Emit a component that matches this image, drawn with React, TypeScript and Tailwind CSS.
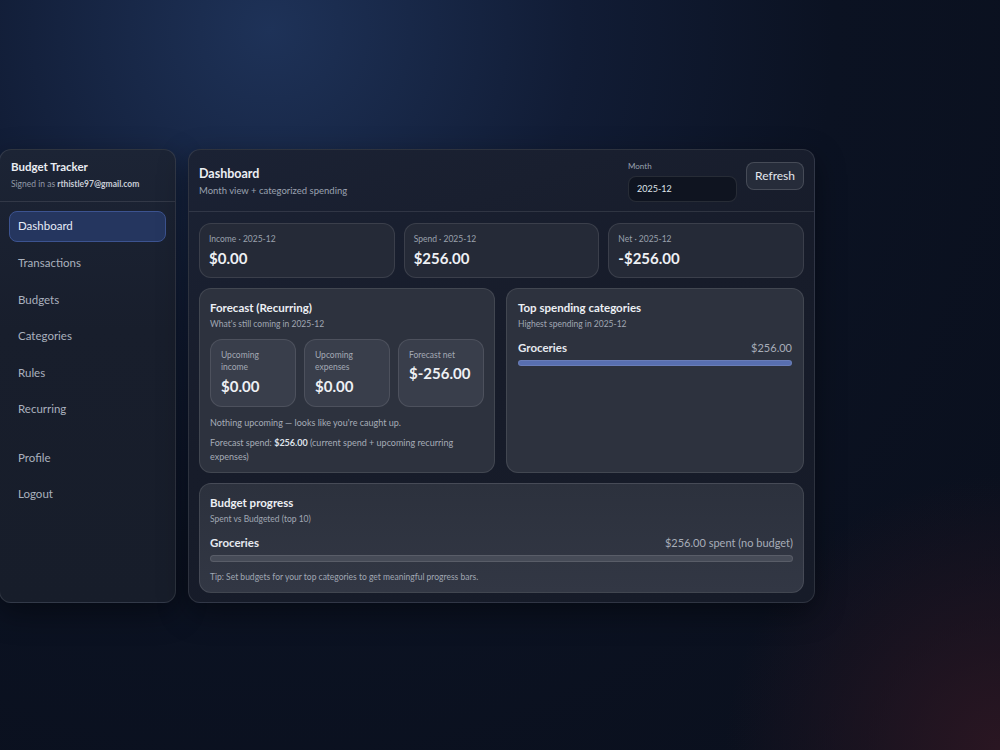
import React from 'react';

const font = { fontFamily: 'Lato, "Noto Sans", sans-serif' };

const navItems = ['Dashboard', 'Transactions', 'Budgets', 'Categories', 'Rules', 'Recurring'];

function StatCard({ label, value }: { label: string; value: string }) {
  return (
    <div className="flex-1 h-[55px] rounded-xl border border-white/10 bg-[#252a37] px-[9px] pt-[9px]">
      <div className="text-[8.5px] leading-[12px] text-[#9aa1ad]">{label}</div>
      <div className="mt-[4px] text-[15px] leading-[18px] font-bold text-[#eef0f4]">{value}</div>
    </div>
  );
}

function MiniBox({ label, value }: { label: React.ReactNode; value: string }) {
  return (
    <div className="flex-1 h-[68px] rounded-xl border border-white/10 bg-[#393e4b] px-[10px] pt-[9px]">
      <div className="text-[8.5px] leading-[12.5px] text-[#a3a9b4]">{label}</div>
      <div className="mt-[2px] text-[15px] leading-[20px] font-bold text-[#eef0f4]">{value}</div>
    </div>
  );
}

export default function App() {
  return (
    <div
      style={font}
      className="min-h-[750px] w-full flex items-center bg-[radial-gradient(circle_at_27%_4%,#1e3258_0%,#111c35_30%,#0b1222_55%,#0a0f1c_100%)]"
    >
      <div className="relative w-full h-[750px] flex items-center bg-[radial-gradient(circle_at_100%_100%,#2a1622_0%,transparent_22%)]">
        <div className="flex gap-[12px] items-stretch ml-[-1px] mt-[1px]">
          {/* sidebar */}
          <aside className="w-[177px] h-[454px] rounded-xl border border-white/10 bg-[linear-gradient(180deg,#1c2435_0%,#181e2c_40%,#171d2a_100%)] shadow-[0_10px_30px_rgba(0,0,0,0.4)] flex flex-col">
            <div className="px-[11px] pt-[10px] h-[52px] border-b border-white/10">
              <div className="text-[11.5px] leading-[14px] font-bold text-[#e9ecf1]">Budget Tracker</div>
              <div className="mt-[4px] text-[8.5px] leading-[12px] text-[#9199a7]">
                Signed in as <span className="font-bold text-[#c9ced7]">rthistle97@gmail.com</span>
              </div>
            </div>
            <nav className="px-[9px] pt-[9px] flex flex-col gap-[5.6px]">
              {navItems.map((item, i) => (
                <div
                  key={item}
                  className={
                    i === 0
                      ? 'h-[31px] rounded-lg border border-[#3c5390] bg-[#25365f] px-[8px] flex items-center text-[11.5px] text-[#e6ecf8]'
                      : 'h-[31px] rounded-lg border border-transparent px-[8px] flex items-center text-[11.5px] text-[#aab1be]'
                  }
                >
                  {item}
                </div>
              ))}
              <div className="h-[6px]" />
              {['Profile', 'Logout'].map((item) => (
                <div key={item} className="h-[31px] rounded-lg border border-transparent px-[8px] flex items-center text-[11.5px] text-[#aab1be]">
                  {item}
                </div>
              ))}
            </nav>
          </aside>

          {/* main */}
          <main className="w-[627px] h-[454px] rounded-xl border border-white/10 bg-[linear-gradient(160deg,#1b2234_0%,#171c2a_45%,#161b28_100%)] shadow-[0_10px_30px_rgba(0,0,0,0.4)] flex flex-col">
            <header className="h-[62px] shrink-0 border-b border-white/10 px-[10px] flex items-center justify-between">
              <div className="pt-[2px]">
                <div className="text-[12.5px] leading-[16px] font-bold text-[#eceff4]">Dashboard</div>
                <div className="mt-[3px] text-[9.5px] leading-[12px] text-[#9aa2b0]">Month view + categorized spending</div>
              </div>
              <div className="flex items-start gap-[9px] pt-[2px]">
                <div>
                  <div className="text-[8px] leading-[10px] text-[#9aa2b0] mb-[5px]">Month</div>
                  <div className="w-[109px] h-[26px] rounded-lg border border-white/10 bg-[#0f1420] px-[8px] flex items-center text-[9px] text-[#dfe3ea]">
                    2025-12
                  </div>
                </div>
                <button className="mt-[1px] h-[28px] px-[8px] rounded-lg border border-white/15 bg-[#262c3a] text-[12px] text-[#e3e7ee]">
                  Refresh
                </button>
              </div>
            </header>

            <div className="px-[10px] pt-[11px] flex flex-col gap-[10px]">
              <div className="flex gap-[9px]">
                <StatCard label="Income · 2025-12" value="$0.00" />
                <StatCard label="Spend · 2025-12" value="$256.00" />
                <StatCard label="Net · 2025-12" value="-$256.00" />
              </div>

              <div className="flex gap-[11px]">
                <section className="flex-1 h-[185px] rounded-xl border border-white/10 bg-[#2d323e] px-[10px] pt-[12px]">
                  <div className="text-[11.5px] leading-[14px] font-bold text-[#eceff4]">Forecast (Recurring)</div>
                  <div className="mt-[3px] text-[8.5px] leading-[12px] text-[#a0a7b3]">What's still coming in 2025-12</div>
                  <div className="mt-[9px] flex gap-[8px]">
                    <MiniBox label={<>Upcoming<br />income</>} value="$0.00" />
                    <MiniBox label={<>Upcoming<br />expenses</>} value="$0.00" />
                    <div className="flex-1 h-[68px] rounded-xl border border-white/10 bg-[#393e4b] px-[10px] pt-[9px]">
                      <div className="text-[8.5px] leading-[12.5px] text-[#a3a9b4]">Forecast net</div>
                      <div className="mt-[2px] text-[15px] leading-[20px] font-bold text-[#eef0f4]">$-256.00</div>
                    </div>
                  </div>
                  <div className="mt-[10px] text-[9px] leading-[12px] text-[#a6acb7]">Nothing upcoming — looks like you're caught up.</div>
                  <p className="mt-[7px] text-[9px] leading-[14px] text-[#a6acb7]">
                    Forecast spend: <b className="text-[#dfe3ea]">$256.00</b> (current spend + upcoming recurring expenses)
                  </p>
                </section>

                <section className="flex-1 h-[185px] rounded-xl border border-white/10 bg-[#2d323e] px-[11px] pt-[12px]">
                  <div className="text-[11.5px] leading-[14px] font-bold text-[#eceff4]">Top spending categories</div>
                  <div className="mt-[3px] text-[8.5px] leading-[12px] text-[#a0a7b3]">Highest spending in 2025-12</div>
                  <div className="mt-[9px] flex justify-between items-baseline">
                    <span className="text-[11.5px] font-bold text-[#e6e9ef]">Groceries</span>
                    <span className="text-[11px] text-[#a7adb8]">$256.00</span>
                  </div>
                  <div className="mt-[4px] h-[6px] rounded-full bg-[#586fb0] border border-white/10" />
                </section>
              </div>

              <section className="h-[110px] rounded-xl border border-white/10 bg-[linear-gradient(180deg,#2c313d_0%,#323744_100%)] px-[10px] pt-[12px]">
                <div className="text-[11.5px] leading-[14px] font-bold text-[#eceff4]">Budget progress</div>
                <div className="mt-[3px] text-[8.5px] leading-[12px] text-[#a0a7b3]">Spent vs Budgeted (top 10)</div>
                <div className="mt-[9px] flex justify-between items-baseline">
                  <span className="text-[11.5px] font-bold text-[#e6e9ef]">Groceries</span>
                  <span className="text-[11px] text-[#a7adb8]">$256.00 spent (no budget)</span>
                </div>
                <div className="mt-[4px] h-[7px] rounded-full bg-[#464b57] border border-white/10" />
                <div className="mt-[9px] text-[8.5px] leading-[12px] text-[#a0a7b3]">
                  Tip: Set budgets for your top categories to get meaningful progress bars.
                </div>
              </section>
            </div>
          </main>
        </div>
      </div>
    </div>
  );
}
